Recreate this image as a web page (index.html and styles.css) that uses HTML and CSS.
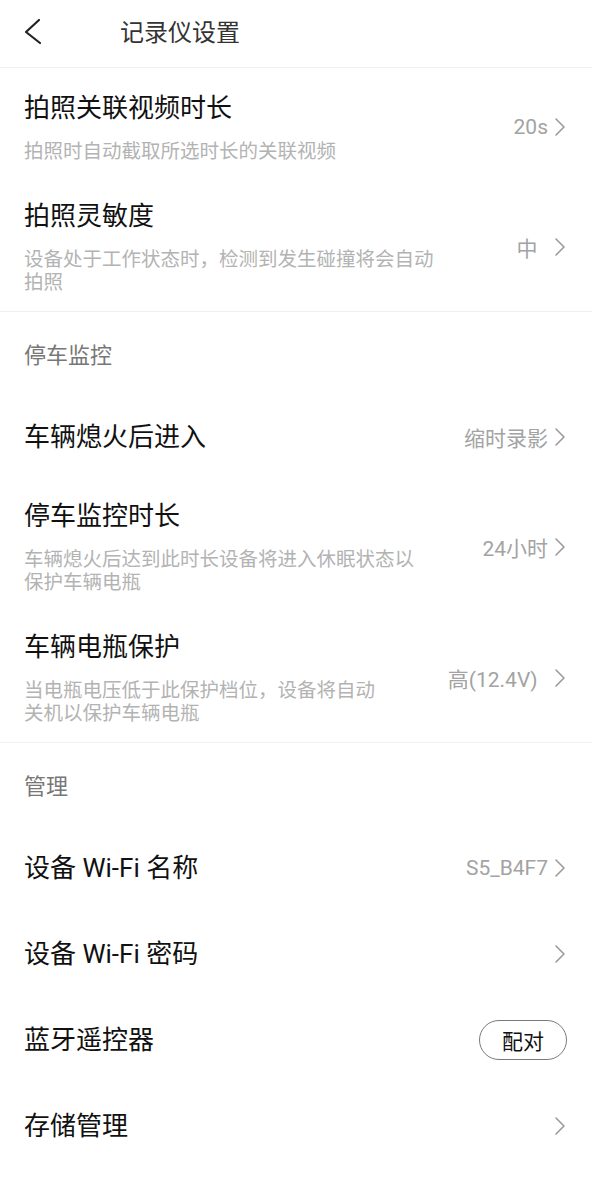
FILE: index.html
```html
<!DOCTYPE html>
<html lang="zh-CN">
<head>
    <meta charset="UTF-8">
    <meta name="viewport" content="width=device-width, initial-scale=1.0">
    <title>记录仪设置</title>
    <link rel="stylesheet" href="styles.css">
</head>
<body>

<div class="header">
    <svg class="back" width="18" height="28" viewBox="0 0 18 28">
        <path d="M15 3 L2 15 L16 26" fill="none" stroke="#222" stroke-width="2.2" stroke-linecap="round" stroke-linejoin="round"/>
    </svg>
    <div class="header-title">记录仪设置</div>
</div>

<div class="group first">
    <div class="row">
        <div class="row-main">
            <div class="row-title">拍照关联视频时长</div>
            <div class="row-sub">拍照时自动截取所选时长的关联视频</div>
        </div>
        <div class="row-value">20s</div>
        <svg class="chevron" width="12" height="20" viewBox="0 0 12 20"><path d="M2 2 L10 10 L2 18"/></svg>
    </div>
    <div class="row">
        <div class="row-main">
            <div class="row-title">拍照灵敏度</div>
            <div class="row-sub">设备处于工作状态时，检测到发生碰撞将会自动拍照</div>
        </div>
        <div class="row-value">中&nbsp;&nbsp;</div>
        <svg class="chevron" width="12" height="20" viewBox="0 0 12 20"><path d="M2 2 L10 10 L2 18"/></svg>
    </div>
</div>

<div class="group">
    <div class="section">停车监控</div>
    <div class="row single">
        <div class="row-main">
            <div class="row-title">车辆熄火后进入</div>
        </div>
        <div class="row-value">缩时录影</div>
        <svg class="chevron" width="12" height="20" viewBox="0 0 12 20"><path d="M2 2 L10 10 L2 18"/></svg>
    </div>
    <div class="row">
        <div class="row-main">
            <div class="row-title">停车监控时长</div>
            <div class="row-sub">车辆熄火后达到此时长设备将进入休眠状态以保护车辆电瓶</div>
        </div>
        <div class="row-value">24小时</div>
        <svg class="chevron" width="12" height="20" viewBox="0 0 12 20"><path d="M2 2 L10 10 L2 18"/></svg>
    </div>
    <div class="row">
        <div class="row-main">
            <div class="row-title">车辆电瓶保护</div>
            <div class="row-sub">当电瓶电压低于此保护档位，设备将自动关机以保护车辆电瓶</div>
        </div>
        <div class="row-value">高(12.4V)&nbsp;&nbsp;</div>
        <svg class="chevron" width="12" height="20" viewBox="0 0 12 20"><path d="M2 2 L10 10 L2 18"/></svg>
    </div>
</div>

<div class="group last">
    <div class="section">管理</div>
    <div class="row single">
        <div class="row-main">
            <div class="row-title">设备 Wi-Fi 名称</div>
        </div>
        <div class="row-value">S5_B4F7</div>
        <svg class="chevron" width="12" height="20" viewBox="0 0 12 20"><path d="M2 2 L10 10 L2 18"/></svg>
    </div>
    <div class="row single">
        <div class="row-main">
            <div class="row-title">设备 Wi-Fi 密码</div>
        </div>
        <svg class="chevron" width="12" height="20" viewBox="0 0 12 20"><path d="M2 2 L10 10 L2 18"/></svg>
    </div>
    <div class="row single">
        <div class="row-main">
            <div class="row-title">蓝牙遥控器</div>
        </div>
        <button class="pair">配对</button>
    </div>
    <div class="row single">
        <div class="row-main">
            <div class="row-title">存储管理</div>
        </div>
        <svg class="chevron" width="12" height="20" viewBox="0 0 12 20"><path d="M2 2 L10 10 L2 18"/></svg>
    </div>
</div>

</body>
</html>
```

FILE: styles.css
```css
body {
    margin: 0;
    background: #ffffff;
    font-family: Roboto, "Noto Sans CJK SC", sans-serif;
    color: #111111;
}
.header {
    height: 68px;
    box-sizing: border-box;
    display: flex;
    align-items: center;
    padding-left: 24px;
    padding-bottom: 6px;
    border-bottom: 1px solid #f0f0f0;
}
.back {
    display: block;
}
.header-title {
    margin-left: 78px;
    font-size: 24px;
    color: #333333;
}
.group {
    border-bottom: 1px solid #f0f0f0;
}
.group.first {
    padding-top: 4px;
}
.group.last {
    border-bottom: none;
}
.section {
    height: 82px;
    display: flex;
    align-items: center;
    padding-left: 24px;
    font-size: 22px;
    color: #777777;
}
.row {
    display: flex;
    align-items: center;
    padding: 19px 26px 17px 24px;
}
.row.single {
    height: 86px;
    padding-top: 0;
    padding-bottom: 0;
    box-sizing: border-box;
}
.row-main {
    flex: 1;
    min-width: 0;
    margin-right: 66px;
}
.row-title {
    font-size: 26px;
    line-height: 34px;
}
.row-sub {
    margin-top: 15px;
    font-size: 19.5px;
    line-height: 23px;
    color: #b3b3b3;
}
.row-value {
    font-size: 21px;
    color: #a3a3a3;
    white-space: nowrap;
}
.chevron {
    display: block;
    margin-left: 6px;
}
.chevron path {
    fill: none;
    stroke: #9a9a9a;
    stroke-width: 1.6;
    stroke-linecap: round;
    stroke-linejoin: round;
}
.pair {
    width: 88px;
    height: 40px;
    border: 1.5px solid #7a7a7a;
    border-radius: 20px;
    background: #ffffff;
    font-family: inherit;
    font-size: 21px;
    color: #111111;
    padding: 0;
    margin-right: -1px;
}
```
